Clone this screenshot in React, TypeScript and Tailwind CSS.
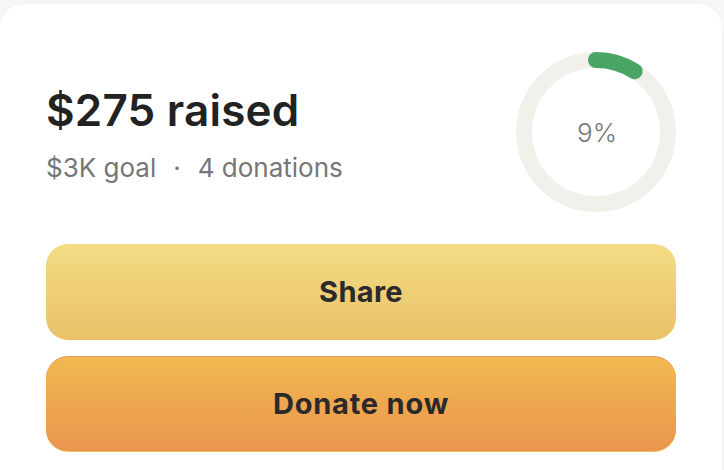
const GOAL = 3000;
const RAISED = 275;

function ProgressRing({ percent }: { percent: number }) {
  const r = 72;
  const circ = 2 * Math.PI * r;
  const len = (circ * percent) / 100;
  return (
    <div className="relative h-[160px] w-[160px] shrink-0">
      <svg width="160" height="160" viewBox="0 0 160 160">
        <circle cx="80" cy="80" r={r} fill="none" stroke="#f1f0eb" strokeWidth="16" />
        <circle
          cx="80"
          cy="80"
          r={r}
          fill="none"
          stroke="#4aa564"
          strokeWidth="16"
          strokeLinecap="round"
          strokeDasharray={`${len} ${circ}`}
          transform="rotate(-90 80 80)"
        />
      </svg>
      <div className="absolute inset-0 flex items-center justify-center pl-[2px] text-[26px] font-light text-[#777]">
        {percent}%
      </div>
    </div>
  );
}

export default function App() {
  const percent = Math.round((RAISED / GOAL) * 100);
  return (
    <div className="h-[470px] overflow-hidden bg-[#f6f6f6] pt-1 font-['Inter',sans-serif]">
      <div className="w-[722px] rounded-[24px] bg-white px-[46px] pb-10 pt-12 shadow-[0_0_2px_rgba(0,0,0,0.04)]">
        <div className="flex items-center justify-between">
          <div className="pt-[4px]">
            <h1 className="text-[44px] font-semibold leading-[52px] tracking-[0.2px] text-[#222]">
              ${RAISED} raised
            </h1>
            <p className="mt-4 text-[26px] leading-[32px] text-[#767676]">
              $3K goal<span className="mx-[17px]">·</span>4 donations
            </p>
          </div>
          <ProgressRing percent={percent} />
        </div>

        <div className="mt-8 flex flex-col gap-4">
          <button className="flex h-[96px] items-center justify-center rounded-[22px] bg-gradient-to-b from-[#f3dc85] to-[#e9c168] text-[29px] font-bold tracking-[0.3px] text-[#2a2a2a]">
            Share
          </button>
          <div className="rounded-[22px] bg-gradient-to-b from-[#e9964f] to-[#f2bc55] py-px">
            <button className="flex h-[94px] w-full items-center justify-center rounded-[22px] bg-gradient-to-b from-[#f2b84f] to-[#e9964f] text-[29px] font-bold tracking-[0.8px] text-[#2a2a2a]">
              Donate now
            </button>
          </div>
        </div>
      </div>
    </div>
  );
}
